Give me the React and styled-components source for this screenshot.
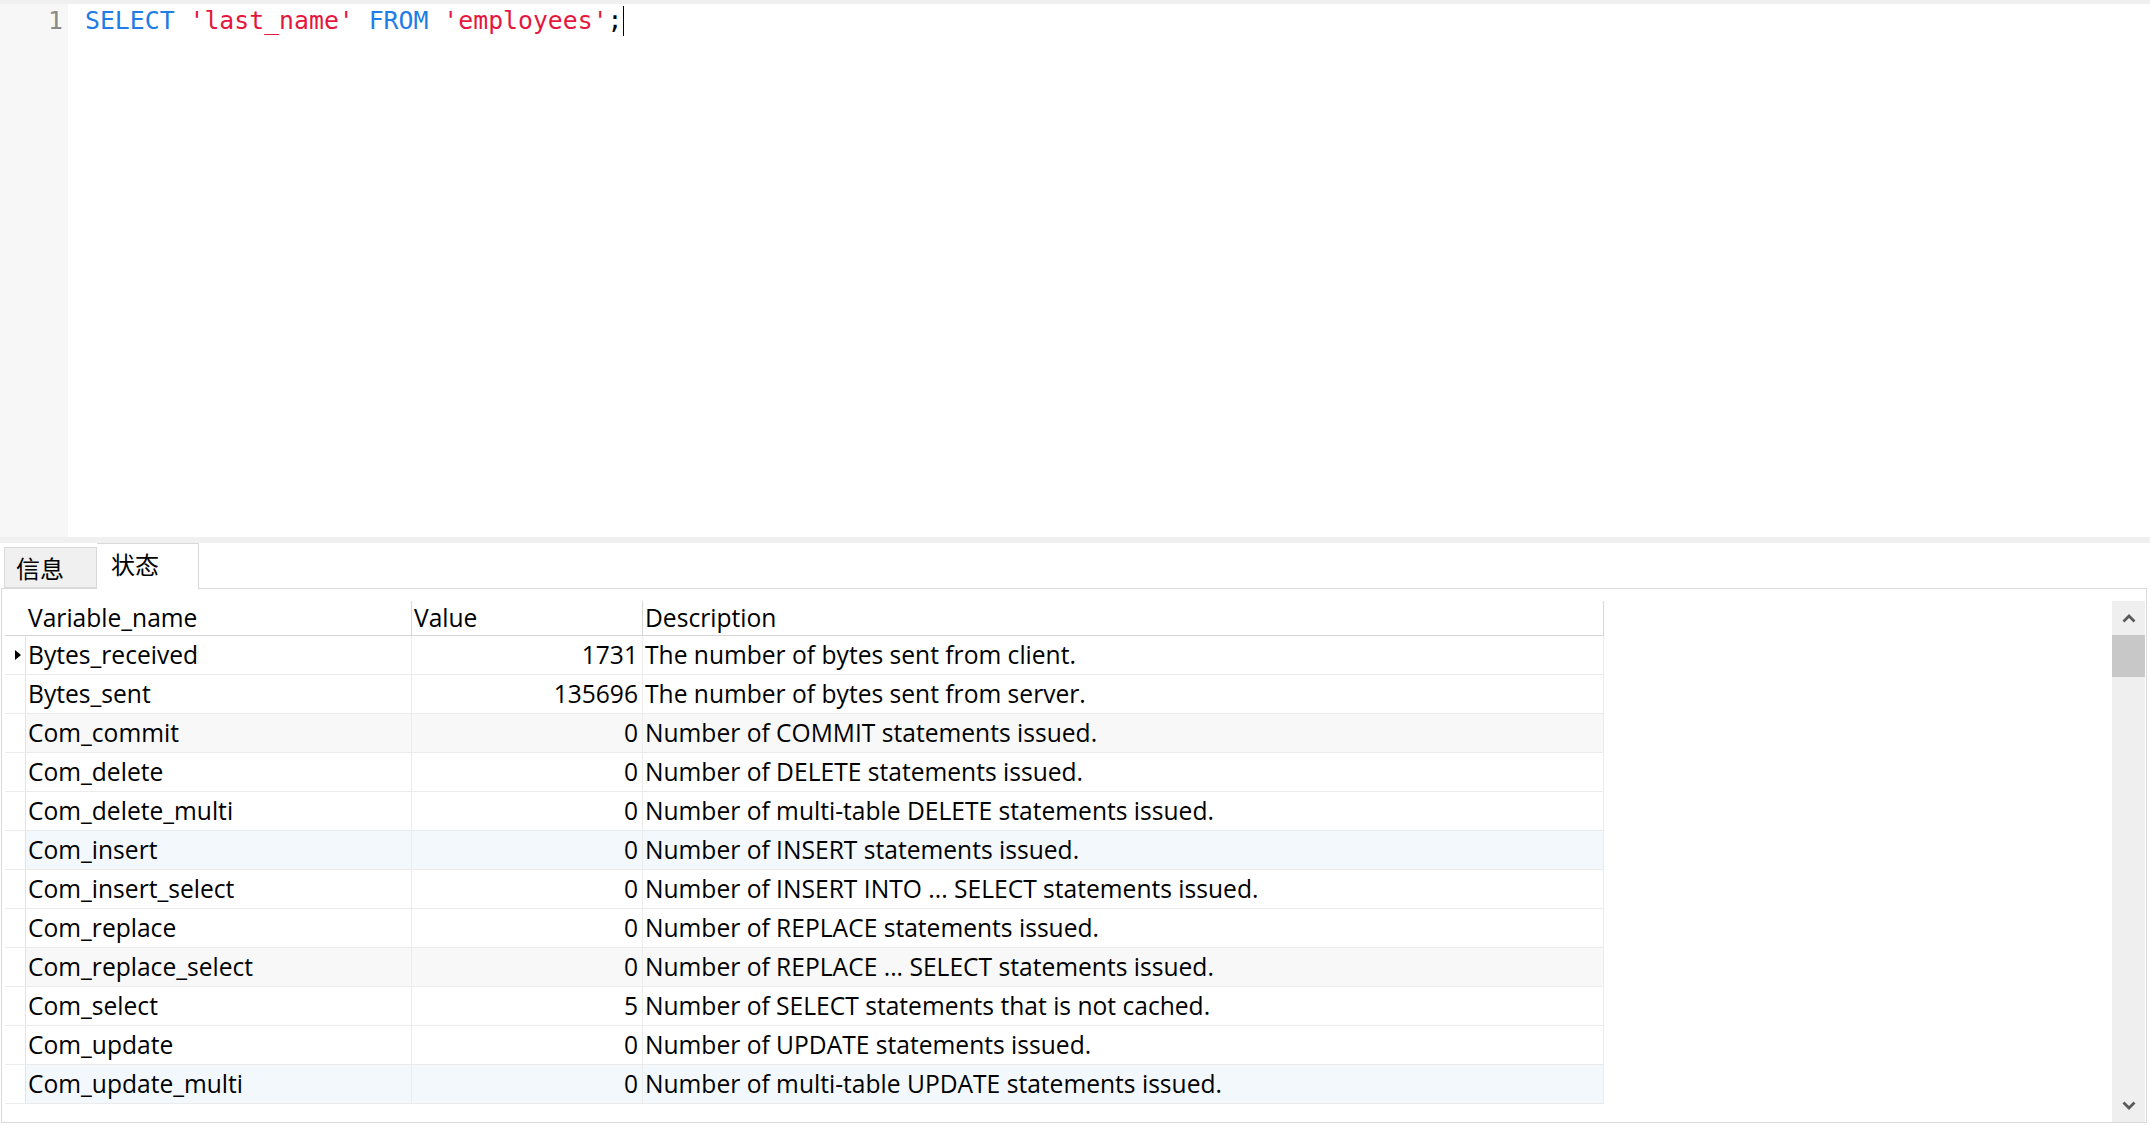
import React from 'react'
import styled, {createGlobalStyle} from 'styled-components'

const GlobalStyle = createGlobalStyle`
  html, body {
    margin: 0;
    padding: 0;
    background: #ffffff;
    overflow: hidden;
  }
`;

const rows = [
  {name: 'Bytes_received', value: '1731', desc: 'The number of bytes sent from client.', current: true},
  {name: 'Bytes_sent', value: '135696', desc: 'The number of bytes sent from server.'},
  {name: 'Com_commit', value: '0', desc: 'Number of COMMIT statements issued.', tint: 'gray'},
  {name: 'Com_delete', value: '0', desc: 'Number of DELETE statements issued.'},
  {name: 'Com_delete_multi', value: '0', desc: 'Number of multi-table DELETE statements issued.'},
  {name: 'Com_insert', value: '0', desc: 'Number of INSERT statements issued.', tint: 'blue'},
  {name: 'Com_insert_select', value: '0', desc: 'Number of INSERT INTO ... SELECT statements issued.'},
  {name: 'Com_replace', value: '0', desc: 'Number of REPLACE statements issued.'},
  {name: 'Com_replace_select', value: '0', desc: 'Number of REPLACE ... SELECT statements issued.', tint: 'gray'},
  {name: 'Com_select', value: '5', desc: 'Number of SELECT statements that is not cached.'},
  {name: 'Com_update', value: '0', desc: 'Number of UPDATE statements issued.'},
  {name: 'Com_update_multi', value: '0', desc: 'Number of multi-table UPDATE statements issued.', tint: 'blue'},
];

const tints = {gray: '#f8f8f8', blue: '#f3f8fd'};

const Page = styled.div`
  width: 2150px;
  height: 1125px;
  display: flex;
  flex-direction: column;
  background: #ffffff;
`;

const Editor = styled.div`
  height: 533px;
  border-top: 4px solid #f0f0f0;
  display: flex;
  font-family: "DejaVu Sans Mono", "Liberation Mono", monospace;
  font-size: 24.8px;
`;

const Gutter = styled.div`
  width: 68px;
  background: #f7f7f7;
  color: #8a8a8a;
  text-align: right;
  box-sizing: border-box;
  padding: 2px 5px 0 0;
  line-height: 30px;
`;

const Code = styled.div`
  flex: 1;
  padding: 2px 0 0 17px;
  line-height: 30px;
  white-space: pre;
  color: #000;
`;

const Keyword = styled.span`
  color: #1e7de6;
`;

const Str = styled.span`
  color: #e5173e;
`;

const Caret = styled.span`
  display: inline-block;
  width: 1px;
  height: 30px;
  background: #000;
  vertical-align: top;
`;

const Splitter = styled.div`
  height: 6px;
  background: #f0f0f0;
`;

const TabBar = styled.div`
  height: 45px;
  display: flex;
  align-items: flex-end;
  padding-left: 4px;
  font-family: "Noto Sans CJK SC", "Noto Sans", sans-serif;
  font-size: 24px;
`;

const Tab = styled.div`
  box-sizing: border-box;
  width: ${p => p.$active ? '102px' : '93px'};
  height: ${p => p.$active ? '46px' : '41px'};
  margin-bottom: ${p => p.$active ? '-1px' : '0'};
  background: ${p => p.$active ? '#ffffff' : '#f0f0f0'};
  border: 1px solid #d9d9d9;
  border-bottom: ${p => p.$active ? 'none' : '1px solid #d9d9d9'};
  border-left: ${p => p.$active ? 'none' : '1px solid #d9d9d9'};
  padding-left: ${p => p.$active ? '14px' : '11px'};
  display: flex;
  align-items: center;
  padding-bottom: ${p => p.$active ? '6px' : '0'};
  color: #000;
  position: relative;
  z-index: 1;
`;

const Panel = styled.div`
  flex: 1;
  margin: 0 3px 2px 1px;
  border: 1px solid #d9d9d9;
  display: flex;
  padding-top: 12px;
  min-height: 0;
`;

const TableWrap = styled.div`
  flex: 1;
  padding-left: 3px;
  font-family: "Open Sans", "Noto Sans", sans-serif;
  font-size: 24.6px;
  color: #000;
`;

const GridRow = styled.div`
  display: grid;
  grid-template-columns: 21px 386px 231px 961px;
  height: ${p => p.$header ? '35px' : '39px'};
  border-bottom: 1px solid ${p => p.$header ? '#d5d5d5' : '#ebebeb'};
  box-sizing: border-box;
  width: 1599px;
`;

const Cell = styled.div`
  box-sizing: border-box;
  border-right: 1px solid ${p => p.$header ? '#d8d8d8' : '#ececec'};
  background: ${p => p.$tint ? tints[p.$tint] : 'transparent'};
  display: flex;
  align-items: center;
  justify-content: ${p => p.$right ? 'flex-end' : 'flex-start'};
  padding: ${p => p.$right ? '0 4px 0 0' : '0 0 0 2px'};
  white-space: nowrap;
  overflow: hidden;
  line-height: 1;
`;

const Indicator = styled.div`
  border-right: 1px solid ${p => p.$header ? 'transparent' : '#e3e3e3'};
  display: flex;
  align-items: center;
  justify-content: center;
  padding-left: 5px;
`;

const Scrollbar = styled.div`
  width: 33px;
  background: #efefef;
  display: flex;
  flex-direction: column;
  margin-right: 1px;
`;

const ScrollButton = styled.div`
  height: 34px;
  display: flex;
  align-items: center;
  justify-content: center;
`;

const Thumb = styled.div`
  height: 42px;
  background: #c8c8c8;
`;

const Track = styled.div`
  flex: 1;
`;

const Chevron = ({up}) => (
  <svg width="14" height="9" viewBox="0 0 14 9">
    <path
      d={up ? 'M1.5 7.5 L7 2 L12.5 7.5' : 'M1.5 1.5 L7 7 L12.5 1.5'}
      fill="none"
      stroke="#5a5a5a"
      strokeWidth="2.8"
    />
  </svg>
);

const Arrow = () => (
  <svg width="6" height="10" viewBox="0 0 6 10">
    <path d="M0 0 L6 5 L0 10 Z" fill="#000"/>
  </svg>
);

export default function App() {
  return (
    <Page>
      <GlobalStyle/>
      <Editor>
        <Gutter>1</Gutter>
        <Code>
          <Keyword>SELECT</Keyword> <Str>'last_name'</Str> <Keyword>FROM</Keyword> <Str>'employees'</Str>;<Caret/>
        </Code>
      </Editor>
      <Splitter/>
      <TabBar>
        <Tab>信息</Tab>
        <Tab $active>状态</Tab>
      </TabBar>
      <Panel>
        <TableWrap>
          <GridRow $header>
            <Indicator $header/>
            <Cell $header>Variable_name</Cell>
            <Cell $header>Value</Cell>
            <Cell $header>Description</Cell>
          </GridRow>
          {rows.map(r => (
            <GridRow key={r.name}>
              <Indicator>{r.current && <Arrow/>}</Indicator>
              <Cell $tint={r.tint}>{r.name}</Cell>
              <Cell $tint={r.tint} $right>{r.value}</Cell>
              <Cell $tint={r.tint}>{r.desc}</Cell>
            </GridRow>
          ))}
        </TableWrap>
        <Scrollbar>
          <ScrollButton><Chevron up/></ScrollButton>
          <Thumb/>
          <Track/>
          <ScrollButton><Chevron/></ScrollButton>
        </Scrollbar>
      </Panel>
    </Page>
  );
}
